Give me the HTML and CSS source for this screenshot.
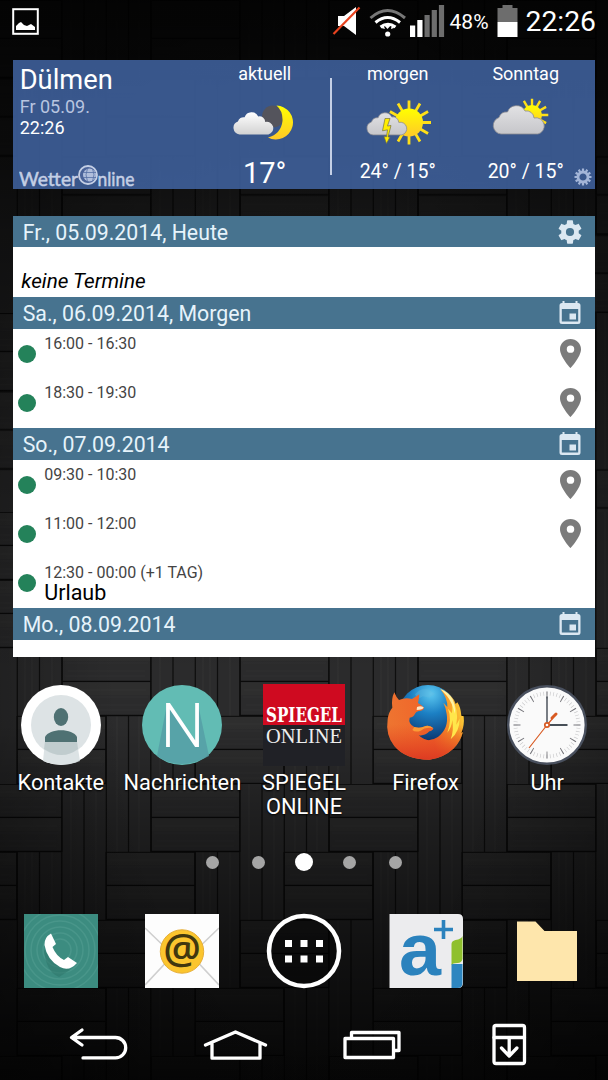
FILE: index.html
```
<!DOCTYPE html>
<html lang="de">

<head>
    <meta charset="UTF-8">
    <title>Startbildschirm</title>
    <link rel="stylesheet" href="styles.css">
</head>

<body>
    <div class="phone">
        <svg class="wallpaper" width="608" height="1080" viewBox="0 0 608 1080">
            <defs>
                <!-- one weave tile: horizontal planks stepping over vertical ones -->
                <g id="plank">
                    <rect width="89" height="34" fill="#2c2c2d"/>
                    <rect x="1" y="1" width="87" height="12" fill="#303031" opacity=".6"/>
                    <path d="M4 8h80M3 15h83M6 23h77M3 28h80" stroke="#373737" stroke-width=".6" opacity=".5"/>
                    <path d="M0 33.500h89M.2 0v34M88.800 0v34" stroke="#0a0a0a" stroke-width="1.400"/>
                </g>
                <g id="pair">
                    <use href="#plank"/><use href="#plank" y="34"/>
                    <path d="M0 .3h89" stroke="#0a0a0a" stroke-width="1"/>
                </g>
                <pattern id="weave" width="178" height="272" patternUnits="userSpaceOnUse">
                    <rect width="178" height="272" fill="#2c2c2d"/>
                    <path d="M25 0v272M32 0v272M52 0v272M71 0v272M96 0v272M117 0v272M139 0v272M160 0v272" stroke="#383838" stroke-width="1" opacity=".6"/>
                    <path d="M17.300 0v272M39.500 0v272M61.800 0v272M84 0v272M106.300 0v272M128.500 0v272M150.800 0v272M173 0v272" stroke="#0e0e0e" stroke-width="1.300"/>
                    <use href="#pair" x="-27"/><use href="#pair" x="151"/>
                    <use href="#pair" x="-72" y="68"/><use href="#pair" x="106" y="68"/>
                    <use href="#pair" x="62" y="136"/>
                    <use href="#pair" x="17" y="204"/>
                </pattern>
                <pattern id="weaveTop" href="#weave" patternTransform="scale(1 1.151)"/>
                <pattern id="weaveLow" href="#weave" patternTransform="translate(0 512)"/>
                <linearGradient id="shade" x1="0" y1="0" x2="0" y2="1">
                    <stop offset="0" stop-opacity=".88"/>
                    <stop offset=".1" stop-opacity=".7"/>
                    <stop offset=".22" stop-opacity=".4"/>
                    <stop offset=".55" stop-opacity=".05"/>
                    <stop offset=".67" stop-opacity=".02"/>
                    <stop offset=".76" stop-opacity=".32"/>
                    <stop offset=".88" stop-opacity=".62"/>
                    <stop offset="1" stop-opacity=".86"/>
                </linearGradient>
                <radialGradient id="vignette" cx=".5" cy=".62" r=".62">
                    <stop offset=".5" stop-opacity="0"/>
                    <stop offset="1" stop-opacity=".4"/>
                </radialGradient>
            </defs>
            <rect width="608" height="512" fill="url(#weaveTop)"/>
            <rect y="512" width="608" height="568" fill="url(#weaveLow)"/>
            <rect width="608" height="1080" fill="url(#shade)"/>
            <rect width="608" height="1080" fill="url(#vignette)"/>
        </svg>

        <header class="status">
            <svg width="28" height="28" viewBox="0 0 28 28">
                <rect x="1.2" y="1.2" width="24.6" height="24.6" fill="none" stroke="#fff" stroke-width="2"/>
                <path d="M4 22v-4l3-3 2-1 3 3 3 1 4-2 4 3v3z" fill="#fff"/>
            </svg>
            <div class="status-right">
                <svg width="115" height="34" viewBox="330 4 115 34">
                    <path d="M337 16h6l12-9v28l-12-9h-6z" fill="#fff"/>
                    <path d="M332.500 34l26-26.500" stroke="#e8431f" stroke-width="2.200"/>
                    <g fill="none" stroke="#fff" stroke-width="3">
                        <path d="M369.500 18q17-15 34.500 0" stroke="#777"/>
                        <path d="M374.500 22.500q12-10 24.500 0"/>
                        <path d="M379.500 27q7.500-5.500 15 0"/>
                    </g>
                    <path d="M382 24h9l-4.500 5zM391 24l2 4-3 1zM382 24l-2 4 4 1z" fill="#fff"/>
                    <circle cx="386.700" cy="34" r="2.600" fill="#fff"/>
                    <path d="M409 25.500h5.200v11.500H409zM416.300 20h5.200v17h-5.200z" fill="#fff"/>
                    <path d="M423.500 15h5.200v22h-5.200zM430.700 10h5.200v27h-5.200zM437.900 5h5.200v32h-5.200z" fill="#6d6d6d"/>
                </svg>
                <span class="percent">48%</span>
                <svg width="21" height="34" viewBox="0 0 21 34">
                    <path d="M5.500 1h10v3h5v14H.5V4h5z" fill="#6d6d6d"/>
                    <path d="M.5 18h20v15H.5z" fill="#fff"/>
                </svg>
                <span class="clock">22:26</span>
            </div>
        </header>

        <section class="weather">
            <div class="place">
                <div class="city">Dülmen</div>
                <div class="date">Fr 05.09.</div>
                <div class="time">22:26</div>
                <svg class="brand" width="124" height="26" viewBox="0 0 124 26">
                    <text x="0" y="22.500" textLength="59" lengthAdjust="spacingAndGlyphs">Wetter</text>
                    <text x="78.500" y="22.500" textLength="37" lengthAdjust="spacingAndGlyphs">nline</text>
                    <circle cx="69" cy="12" r="9" fill="#4a6399" stroke="#c4cfe5" stroke-width="1.800"/>
                    <circle cx="70.500" cy="12" r="6.500" fill="#b0bedc"/>
                    <path d="M64 9.500h13M64 14.500h13M68.500 5.500q-3 6 0 13M73.500 5.500q3 6 0 13" fill="none" stroke="#5570a5" stroke-width=".8"/>
                </svg>
            </div>
            <div class="day">
                <div class="name">aktuell</div>
                <svg width="120" height="50" viewBox="205 97 120 50">
                    <defs>
                        <linearGradient id="cloudFill" x1="0" y1="0" x2="0" y2="1">
                            <stop offset="0" stop-color="#fff"/><stop offset="1" stop-color="#d2d2d2"/>
                        </linearGradient>
                        <linearGradient id="cloudGray" x1="0" y1="0" x2="0" y2="1">
                            <stop offset="0" stop-color="#e2e2e4"/><stop offset="1" stop-color="#c6c6ca"/>
                        </linearGradient>
                        <linearGradient id="sunFill" x1="0" y1="0" x2="0" y2="1">
                            <stop offset="0" stop-color="#ffff00"/><stop offset="1" stop-color="#ffc928"/>
                        </linearGradient>
                        <path id="cloud" d="M9 30A8.500 8.500 0 0 1 7 13.500A7.500 7.500 0 0 1 15.500 8A9.500 9.500 0 0 1 33 7A7.500 7.500 0 0 1 42 14A8.200 8.200 0 1 1 46 30Z"/>
                        <g id="rays">
                            <path id="ray4" d="M0-12V-22M0 12V22M-12 0H-22M12 0H22"/>
                            <use href="#ray4" transform="rotate(30)"/>
                            <use href="#ray4" transform="rotate(60)"/>
                        </g>
                    </defs>
                    <circle cx="273" cy="116.500" r="11" fill="#54545c"/>
                    <path d="M276.500 105.500A17 17 0 1 1 268 137.500Q281 134 282.500 121Q283 111 276.500 105.500Z" fill="url(#sunFill)"/>
                    <use href="#cloud" fill="url(#cloudFill)" transform="translate(232.500 111) scale(.78)"/>
                </svg>
                <div class="temp now">17°</div>
            </div>
            <div class="divider"></div>
            <div class="day">
                <div class="name">morgen</div>
                <svg width="120" height="50" viewBox="338 97 120 50">
                    <g transform="translate(409 122.500)">
                        <use href="#rays" stroke="#ffdf18" stroke-width="2.800"/>
                        <circle r="14" fill="url(#sunFill)"/>
                    </g>
                    <use href="#cloud" fill="url(#cloudGray)" stroke="#8b8b91" stroke-width="1" transform="translate(366 111.500) scale(.78)"/>
                    <path d="M385 118.500h5l-2.500 7.500 3.500-.500-3 11.500 2 0-3.500 6.500-2.500-7 2.500.300 1-7-5 1z" fill="#ffee00" stroke="#77743c" stroke-width=".7"/>
                </svg>
                <div class="temp">24° / 15°</div>
            </div>
            <div class="day last">
                <div class="name">Sonntag</div>
                <svg width="120" height="50" viewBox="466 97 120 50">
                    <g transform="translate(532 115) scale(.74)">
                        <use href="#rays" stroke="#ffdf18" stroke-width="3.200"/>
                        <circle r="13.500" fill="url(#sunFill)"/>
                    </g>
                    <use href="#cloud" fill="url(#cloudGray)" stroke="#8b8b91" stroke-width=".8" transform="translate(492 104)"/>
                </svg>
                <div class="temp">20° / 15°</div>
            </div>
            <svg class="weather-gear" width="18" height="18" viewBox="-9 -9 18 18">
                <circle r="5" fill="none" stroke="#a3b5d8" stroke-width="2.800"/>
                <g stroke="#a3b5d8" stroke-width="2.200">
                    <path d="M0-5.500v-3M0 5.500v3M-5.500 0h-3M5.500 0h3"/>
                    <path d="M0-5.500v-3M0 5.500v3M-5.500 0h-3M5.500 0h3" transform="rotate(30)"/>
                    <path d="M0-5.500v-3M0 5.500v3M-5.500 0h-3M5.500 0h3" transform="rotate(60)"/>
                </g>
            </svg>
        </section>

        <svg class="symbols">
            <symbol id="cal" viewBox="0 0 22 24">
                <path fill-rule="evenodd" d="M3.500 0h2v2h11V0h2v2h.500a2.500 2.500 0 0 1 2.500 2.500v16a2.500 2.500 0 0 1-2.500 2.500H3A2.500 2.500 0 0 1 .5 20.500v-16A2.500 2.500 0 0 1 3 2h.500zM2.800 8v12.500h16.400V8zM10.500 12.500h6.500v6h-6.500z"/>
            </symbol>
            <symbol id="pin" viewBox="5 2 14 20" preserveAspectRatio="none">
                <path d="M12 2C8.130 2 5 5.130 5 9c0 5.250 7 13 7 13s7-7.750 7-13c0-3.870-3.130-7-7-7zm0 9.500a2.500 2.500 0 0 1 0-5 2.500 2.500 0 0 1 0 5z"/>
            </symbol>
        </svg>

        <section class="agenda">
            <div class="day-head first">
                <span>Fr., 05.09.2014, Heute</span>
                <svg width="28" height="28" viewBox="0 0 24 24"><path d="M19.430 12.980c.040-.320.070-.640.070-.980s-.030-.660-.070-.980l2.110-1.650c.190-.150.240-.420.120-.640l-2-3.460c-.120-.220-.390-.300-.610-.220l-2.490 1c-.520-.400-1.080-.730-1.690-.980l-.380-2.650C14.460 2.180 14.250 2 14 2h-4c-.250 0-.460.180-.490.420l-.380 2.650c-.610.250-1.170.590-1.690.980l-2.490-1c-.230-.090-.490 0-.610.220l-2 3.460c-.130.220-.070.490.120.640l2.110 1.650c-.040.320-.070.650-.070.980s.030.660.070.980l-2.110 1.650c-.190.150-.240.420-.120.640l2 3.460c.120.220.390.300.610.220l2.490-1c.520.400 1.080.730 1.690.980l.380 2.650c.030.240.240.420.490.420h4c.250 0 .460-.180.490-.420l.380-2.650c.610-.250 1.170-.590 1.690-.980l2.490 1c.230.090.490 0 .610-.220l2-3.460c.120-.220.070-.490-.120-.640l-2.110-1.650zM12 15.500A3.500 3.500 0 1 1 12 8.500a3.500 3.500 0 0 1 0 7z"/></svg>
            </div>
            <div class="none">keine Termine</div>

            <div class="day-head"><span>Sa., 06.09.2014, Morgen</span><svg width="22" height="24"><use href="#cal"/></svg></div>
            <div class="event">
                <i class="bullet"></i>
                <div class="when">16:00 - 16:30</div>
                <svg class="pin" width="21" height="29"><use href="#pin"/></svg>
            </div>
            <div class="event tall">
                <i class="bullet"></i>
                <div class="when">18:30 - 19:30</div>
                <svg class="pin" width="21" height="29"><use href="#pin"/></svg>
            </div>

            <div class="day-head"><span>So., 07.09.2014</span><svg width="22" height="24"><use href="#cal"/></svg></div>
            <div class="event">
                <i class="bullet"></i>
                <div class="when">09:30 - 10:30</div>
                <svg class="pin" width="21" height="29"><use href="#pin"/></svg>
            </div>
            <div class="event">
                <i class="bullet"></i>
                <div class="when">11:00 - 12:00</div>
                <svg class="pin" width="21" height="29"><use href="#pin"/></svg>
            </div>
            <div class="event tall">
                <i class="bullet"></i>
                <div class="when">12:30 - 00:00 (+1 TAG)<div class="title">Urlaub</div></div>
            </div>

            <div class="day-head"><span>Mo., 08.09.2014</span><svg width="22" height="24"><use href="#cal"/></svg></div>
        </section>

        <main class="apps">
            <div class="app">
                <svg width="82" height="82" viewBox="0 0 82 82">
                    <circle cx="41" cy="41" r="40" fill="#fff"/>
                    <circle cx="41" cy="41" r="30" fill="#dde3e5"/>
                    <path d="M25 58h32l3 19q-18 8-37 0z" fill="#d3dcde" opacity=".8"/>
                    <path d="M25 58h32l1 7q-16 12-34 0z" fill="#c0ccce"/>
                    <ellipse cx="41" cy="33" rx="7.200" ry="9" fill="#4f7173"/>
                    <path d="M25 58v-5c4-9 28-9 32 0v5z" fill="#4f7173"/>
                </svg>
                <span>Kontakte</span>
            </div>
            <div class="app">
                <svg width="82" height="82" viewBox="0 0 82 82">
                    <circle cx="41" cy="41" r="40" fill="#62bcb4"/>
                    <path d="M26 20L16 72q23 16 52 0L57 20v42z" fill="#569fa6" opacity=".85"/>
                    <text class="letter" x="41.500" y="63" text-anchor="middle">N</text>
                </svg>
                <span>Nachrichten</span>
            </div>
            <div class="app">
                <svg width="82" height="82" viewBox="0 0 82 82">
                    <rect width="82" height="82" fill="#202126"/>
                    <rect width="82" height="41" fill="#cf0a20"/>
                    <text class="spiegel" x="3" y="38" textLength="76" lengthAdjust="spacingAndGlyphs">SPIEGEL</text>
                    <text class="online" x="3" y="58.500" textLength="76" lengthAdjust="spacingAndGlyphs">ONLINE</text>
                </svg>
                <span>SPIEGEL<br>ONLINE</span>
            </div>
            <div class="app">
                <svg width="82" height="82" viewBox="15 27 246 246">
                    <defs>
                        <radialGradient id="globe" cx=".55" cy=".15" r=".85">
                            <stop offset="0" stop-color="#5cc8f0"/><stop offset=".4" stop-color="#1c80c4"/><stop offset="1" stop-color="#0b2f68"/>
                        </radialGradient>
                        <linearGradient id="fox" x1="0" y1=".3" x2="1" y2=".1">
                            <stop offset="0" stop-color="#ee7430"/><stop offset=".5" stop-color="#f0652a"/><stop offset=".82" stop-color="#f8a52c"/><stop offset="1" stop-color="#ffdf3c"/>
                        </linearGradient>
                        <linearGradient id="foxLow" x1="0" y1="0" x2="0" y2="1">
                            <stop offset=".5" stop-color="#e4421f" stop-opacity="0"/><stop offset="1" stop-color="#dd3b22"/>
                        </linearGradient>
                        <path id="foxBody" d="M37 98Q33 72 43 52Q48 66 57 75Q76 66 96 72Q108 65 118 58Q117 72 114 84Q126 91 132 98Q132 107 116 108Q108 110 105 116Q101 126 89 128Q84 146 103 156Q118 161 131 155Q148 148 160 160Q158 168 148 169Q136 183 116 181Q142 207 174 186Q207 160 200 117Q197 96 190 83L202 96Q203 70 181 42Q205 50 222 75L227 87L232 82Q242 96 244 122L251 124Q254 151 244 174L249 171Q240 203 220 221Q189 249 148 254Q77 254 43 213Q16 180 23 133Q25 112 37 98Z"/>
                    </defs>
                    <circle cx="144" cy="118" r="88" fill="url(#globe)"/>
                    <path d="M105 58q18-20 40-15l20 13-16 12-20-4-15 8z" fill="#66bae0" opacity=".35"/>
                    <use href="#foxBody" fill="url(#fox)"/>
                    <use href="#foxBody" fill="url(#foxLow)"/>
                    <path d="M111 96q11-5 20 1-2 8-21 8z" fill="#ffe6c4"/>
                    <path d="M103 156q15 5 28-1 17-7 29 5-24-5-38 7-15 6-25-2z" fill="#fb9b36"/>
                    <path d="M213 70q25 32 16 79l10-18q0 39-27 62 10-27 5-58-2 22-15 38 15-40 2-72l12 14q3-25-3-45z" fill="#ffe64b"/>
                    <path d="M181 42q25 9 37 31 9 22 7 43-9-34-24-53z" fill="#fff2a2"/>
                </svg>
                <span>Firefox</span>
            </div>
            <div class="app">
                <svg width="82" height="82" viewBox="-41 -41 82 82">
                    <circle r="38.800" fill="#fafafa" stroke="#49505e" stroke-width="2.400"/>
                    <circle r="31.500" fill="none" stroke="#c4c4c6" stroke-width="4" pathLength="600" stroke-dasharray="1.800 8.200" stroke-dashoffset=".9"/>
                    <circle r="30" fill="none" stroke="#77777c" stroke-width="7" pathLength="120" stroke-dasharray=".6 9.400" stroke-dashoffset=".3"/>
                    <path d="M0 0V-28.500" stroke="#333b45" stroke-width="1.300"/>
                    <path d="M0 0H20.500" stroke="#333b45" stroke-width="1.800"/>
                    <path d="M0 0L-18 23M0 0L6-7" stroke="#d85a22" stroke-width="1.200"/>
                    <path d="M5-7L9-11" stroke="#d85a22" stroke-width="3" stroke-linecap="round"/>
                    <circle r="2.200" fill="#fff" stroke="#d85a22" stroke-width="1.700"/>
                </svg>
                <span>Uhr</span>
            </div>
        </main>

        <div class="pages"><i></i><i></i><i class="active"></i><i></i><i></i></div>

        <div class="dock">
            <svg width="74" height="74" viewBox="0 0 74 74">
                <rect width="74" height="74" fill="#3c8c80"/>
                <g fill="none" stroke="#56a094" stroke-width="1.500" opacity=".5">
                    <circle cx="36" cy="36" r="11"/><circle cx="36" cy="36" r="17"/><circle cx="36" cy="36" r="23"/><circle cx="36" cy="36" r="29"/><circle cx="36" cy="36" r="35"/><circle cx="36" cy="36" r="41"/>
                </g>
                <path d="M20 36L46 56 35 63Q22 58 20 36z" fill="#2c7468" opacity=".5"/>
                <path d="M27 19.500q-7 4-6.500 11.500Q23 46 36 53q9 5 17-4l-9-6-4 3q-8-4-11.500-13l3.500-3z" fill="#fff"/>
            </svg>
            <svg width="74" height="74" viewBox="0 0 74 74">
                <rect width="74" height="74" fill="#fdfdfd"/>
                <path d="M0 14L28 41 0 71M74 14L46 41 74 71" fill="none" stroke="#cfcfcf" stroke-width="1.600"/>
                <circle cx="37" cy="37.500" r="21.700" fill="#fbc52e" stroke="#e6ae38" stroke-width="1"/>
                <text class="at" x="37" y="50" text-anchor="middle">@</text>
            </svg>
            <svg width="76" height="76" viewBox="-38 -38 76 76">
                <circle r="35" fill="#000" fill-opacity=".35" stroke="#fff" stroke-width="4.500"/>
                <path d="M-19-11h7v7h-7zM-3.500-11h7v7h-7zM12-11h7v7h-7zM-19 4.500h7v7h-7zM-3.500 4.500h7v7h-7zM12 4.500h7v7h-7z" fill="#fff"/>
            </svg>
            <svg width="74" height="74" viewBox="0 0 74 74">
                <path d="M.5 0H69q5 0 5 5v64q0 5-5 5H.5z" fill="#ececee"/>
                <path d="M62.500 50H73.500v19q0 5-5 5h-6z" fill="#2d86c0"/>
                <path d="M62.500 51V30q0-3 4-4 6-1 7-4v23q-1 4-5 4-5 0-6 2z" fill="#8fc02e"/>
                <text class="calc" x="10" y="61" textLength="42" lengthAdjust="spacingAndGlyphs">a</text>
                <path d="M45 15.500h19M54.500 6v19" stroke="#2b82bd" stroke-width="3.600"/>
            </svg>
            <svg width="74" height="74" viewBox="0 0 74 74">
                <path d="M7 7.500h18.500L34.500 17H67v50H7z" fill="#fee6ac"/>
            </svg>
        </div>

        <nav class="nav">
            <svg width="60" height="42" viewBox="69.500 1024 60 42"><path d="M82.500 1030L72 1037.500l10.500 7.500M73 1037.500h43a10.200 10.200 0 0 1 0 20.400H83.500"/></svg>
            <svg width="66" height="42" viewBox="203 1024 66 42"><path d="M205.500 1045L235.500 1032l30 13M212 1043v15.200h48V1043"/></svg>
            <svg width="60" height="42" viewBox="342.500 1024 60 42"><path d="M345.500 1038.500h48.500v19h-48.500zM352 1037v-4.500h47.500v18H396"/></svg>
            <svg width="36" height="44" viewBox="491 1023 36 44"><rect x="494" y="1025.500" width="30.500" height="38" rx="2"/><path d="M494 1037.500h30.500M509.200 1038v16M501.500 1048l7.700 8 7.700-8"/></svg>
        </nav>
    </div>
</body>

</html>
```
FILE: styles.css
```
body {
    margin: 0;
    background: #0a0a0a;
    font-family: Roboto, "Liberation Sans", sans-serif;
    color: #fff;
}

svg {
    display: block;
    flex: none;
}

.phone {
    position: relative;
    width: 608px;
    height: 1080px;
    overflow: hidden;
    isolation: isolate;
}

.wallpaper {
    position: absolute;
    top: 0;
    left: 0;
    z-index: -1;
}

.status {
    display: flex;
    justify-content: space-between;
    height: 60px;
    padding: 8px 12px 0;
    box-sizing: border-box;
}

.status-right {
    display: flex;
    margin-top: -4px;
}

.percent {
    font-size: 21px;
    line-height: 36px;
    margin: 0 7px 0 4px;
    width: 40px;
}

.clock {
    font-size: 28.300px;
    line-height: 36px;
    margin-left: 8px;
}

/* Wetter */
.weather {
    position: relative;
    display: grid;
    grid-template-columns: 191.500px 120px 13px 120px 120px;
    width: 581.400px;
    height: 129px;
    margin-left: 13.200px;
    background: rgba(64, 98, 158, 0.88);
}

.place {
    padding: 5px 0 0 6.500px;
}

.city {
    font-size: 27.300px;
    line-height: 30px;
}

.date,
.time {
    font-size: 18px;
    line-height: 21px;
}

.date {
    margin-top: 1px;
    color: #b8c5e0;
}

.brand {
    margin-top: 25px;
    margin-left: -1px;
}

.brand text {
    font-family: Lato, sans-serif;
    font-size: 20px;
    fill: #c4cfe5;
    stroke: #c4cfe5;
    stroke-width: .5px;
}

.day {
    padding-top: 4px;
    text-align: center;
}

.day.last {
    margin-left: 8px;
    margin-right: -8px;
}

.name {
    font-size: 18px;
    line-height: 20px;
}

.day svg {
    margin-top: 13px;
}

.temp {
    font-size: 19.500px;
    line-height: 24px;
    margin-top: 13px;
}

.temp.now {
    font-size: 29px;
    line-height: 30px;
    margin-top: 11px;
}

.divider {
    width: 1.500px;
    height: 97px;
    margin: 18px auto 0;
    background: #c5d0e6;
}

.weather-gear {
    position: absolute;
    right: 3px;
    bottom: 3px;
}

/* Kalender */
.symbols {
    position: absolute;
    width: 0;
    height: 0;
}

.agenda {
    width: 581.400px;
    height: 441px;
    margin: 27px 0 0 13.200px;
    background: #fff;
    color: #111;
}

.day-head {
    display: flex;
    justify-content: space-between;
    align-items: center;
    height: 32px;
    padding: 0 14px 0 9.500px;
    box-sizing: border-box;
    background: #47738f;
    color: #e6f3fb;
    fill: #dce8f2;
    font-size: 21.300px;
    line-height: 32px;
}

.day-head span {
    padding-top: 2px;
}

.day-head.first {
    height: 31px;
    padding-right: 11px;
}

.none {
    height: 50px;
    padding: 19px 0 0 8px;
    box-sizing: border-box;
    font-size: 20.700px;
    font-style: italic;
    line-height: 30px;
    color: #000;
}

.event {
    display: flex;
    height: 49px;
}

.event.tall {
    height: 50px;
}

.bullet {
    width: 18px;
    height: 18px;
    margin: 16px 8px 0 5px;
    border-radius: 50%;
    background: #24825a;
}

.when {
    flex: 1;
    padding-top: 5px;
    font-size: 16px;
    line-height: 19px;
    color: #444;
}

.title {
    font-size: 21.500px;
    line-height: 22px;
    color: #000;
}

.pin {
    margin: 10px 14px 0 0;
    fill: #7b7b7b;
}

/* Apps */
.apps {
    display: grid;
    grid-template-columns: repeat(5, 1fr);
    height: 165px;
    padding-top: 27px;
    box-sizing: border-box;
}

.app {
    display: flex;
    flex-direction: column;
    align-items: center;
    font-size: 21.800px;
    line-height: 24.300px;
    text-align: center;
    text-shadow: 0 1px 2px #000;
}

.app span {
    margin-top: 5px;
}

.letter {
    font-size: 62px;
    font-weight: 300;
    fill: #fff;
    text-shadow: none;
}

.spiegel {
    font-family: "DejaVu Serif", serif;
    font-size: 20px;
    font-weight: bold;
    fill: #fff;
    text-shadow: none;
}

.online {
    font-family: "Liberation Serif", serif;
    font-size: 21px;
    fill: #eee;
    text-shadow: none;
}

.pages {
    display: flex;
    justify-content: center;
    align-items: center;
    gap: 32.700px;
    height: 18px;
    margin-top: 31px;
}

.pages i {
    width: 13px;
    height: 13px;
    border-radius: 50%;
    background: #a5a5a5;
}

.pages .active {
    width: 18px;
    height: 18px;
    margin: 0 -2.500px;
    background: #fff;
}

.dock {
    display: grid;
    grid-template-columns: repeat(5, 1fr);
    place-items: center;
    height: 76px;
    margin-top: 42px;
}

.at {
    font-family: "Open Sans", sans-serif;
    font-size: 42px;
    font-weight: 600;
    fill: #41370f;
}

.calc {
    font-family: "Liberation Sans", sans-serif;
    font-size: 74px;
    font-weight: bold;
    fill: #2b82bd;
}

.nav {
    display: grid;
    grid-template-columns: repeat(4, 1fr);
    place-items: center;
    height: 44px;
    margin-top: 34px;
    padding: 0 31px;
}

.nav svg {
    fill: none;
    stroke: #fff;
    stroke-width: 3.300;
    stroke-linecap: round;
    stroke-linejoin: round;
}
```
